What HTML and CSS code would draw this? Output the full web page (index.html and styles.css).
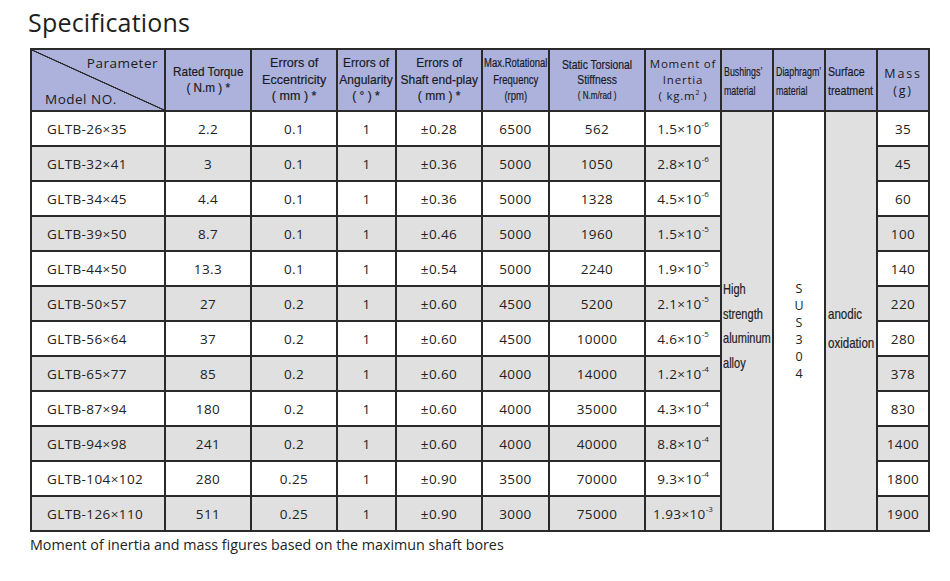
FILE: index.html
```html
<!DOCTYPE html>
<html>
<head>
<meta charset="utf-8">
<link rel="stylesheet" href="styles.css">
</head>
<body>
<h1 class="title">Specifications</h1>
<table class="spec">
  <colgroup>
    <col class="c-model"><col class="c86"><col class="c86"><col class="c59"><col class="c86"><col class="c67"><col class="c96"><col class="c76"><col class="c52"><col class="c52"><col class="c52"><col class="c52">
  </colgroup>
  <thead>
    <tr class="head">
      <th class="diag"><div class="diag-in"><span class="param">Parameter</span><span class="model">Model NO.</span></div></th>
      <th class="hd two"><span class="sx s87">Rated Torque<br>( N.m ) *</span></th>
      <th class="hd"><span class="sx s93">Errors of<br>Eccentricity<br>( mm ) *</span></th>
      <th class="hd"><span class="sx s89">Errors of<br>Angularity<br>( ° ) *</span></th>
      <th class="hd"><span class="sx s89">Errors of<br>Shaft end-play<br>( mm ) *</span></th>
      <th class="hd sm"><span class="sx s76">Max.Rotational<br>Frequency<br>(rpm)</span></th>
      <th class="hd st"><span class="sx s77">Static Torsional<br>Stiffness<br><span class="tiny">( N.m/rad )</span></span></th>
      <th class="wide">Moment of<br>Inertia<br>( kg.m<sup>2</sup> )</th>
      <th class="hd mat"><span class="sxl s655">Bushings’<br>material</span></th>
      <th class="hd mat"><span class="sxl s655">Diaphragm’<br>material</span></th>
      <th class="hd mat"><span class="sxl s79">Surface<br>treatment</span></th>
      <th class="mass">Mass<br>(g)</th>
    </tr>
  </thead>
  <tbody>
    <tr class="w">
      <td class="mod">GLTB-26×35</td><td>2.2</td><td>0.1</td><td>1</td><td>±0.28</td><td>6500</td><td>562</td><td>1.5×10<sup>-6</sup></td>
      <td rowspan="12" class="g merged"><div class="alum"><span class="sxl s76">High<br>strength<br>aluminum<br>alloy</span></div></td>
      <td rowspan="12" class="w merged"><div class="sus">S<br>U<br>S<br>3<br>0<br>4</div></td>
      <td rowspan="12" class="g merged"><div class="anod"><span class="sxl s77">anodic<br>oxidation</span></div></td>
      <td>35</td>
    </tr>
    <tr class="g"><td class="mod">GLTB-32×41</td><td>3</td><td>0.1</td><td>1</td><td>±0.36</td><td>5000</td><td>1050</td><td>2.8×10<sup>-6</sup></td><td>45</td></tr>
    <tr class="w"><td class="mod">GLTB-34×45</td><td>4.4</td><td>0.1</td><td>1</td><td>±0.36</td><td>5000</td><td>1328</td><td>4.5×10<sup>-6</sup></td><td>60</td></tr>
    <tr class="g"><td class="mod">GLTB-39×50</td><td>8.7</td><td>0.1</td><td>1</td><td>±0.46</td><td>5000</td><td>1960</td><td>1.5×10<sup>-5</sup></td><td>100</td></tr>
    <tr class="w"><td class="mod">GLTB-44×50</td><td>13.3</td><td>0.1</td><td>1</td><td>±0.54</td><td>5000</td><td>2240</td><td>1.9×10<sup>-5</sup></td><td>140</td></tr>
    <tr class="g"><td class="mod">GLTB-50×57</td><td>27</td><td>0.2</td><td>1</td><td>±0.60</td><td>4500</td><td>5200</td><td>2.1×10<sup>-5</sup></td><td>220</td></tr>
    <tr class="w"><td class="mod">GLTB-56×64</td><td>37</td><td>0.2</td><td>1</td><td>±0.60</td><td>4500</td><td>10000</td><td>4.6×10<sup>-5</sup></td><td>280</td></tr>
    <tr class="g"><td class="mod">GLTB-65×77</td><td>85</td><td>0.2</td><td>1</td><td>±0.60</td><td>4000</td><td>14000</td><td>1.2×10<sup>-4</sup></td><td>378</td></tr>
    <tr class="w"><td class="mod">GLTB-87×94</td><td>180</td><td>0.2</td><td>1</td><td>±0.60</td><td>4000</td><td>35000</td><td>4.3×10<sup>-4</sup></td><td>830</td></tr>
    <tr class="g"><td class="mod">GLTB-94×98</td><td>241</td><td>0.2</td><td>1</td><td>±0.60</td><td>4000</td><td>40000</td><td>8.8×10<sup>-4</sup></td><td>1400</td></tr>
    <tr class="w"><td class="mod">GLTB-104×102</td><td>280</td><td>0.25</td><td>1</td><td>±0.90</td><td>3500</td><td>70000</td><td>9.3×10<sup>-4</sup></td><td>1800</td></tr>
    <tr class="g"><td class="mod">GLTB-126×110</td><td>511</td><td>0.25</td><td>1</td><td>±0.90</td><td>3000</td><td>75000</td><td>1.93×10<sup>-3</sup></td><td>1900</td></tr>
  </tbody>
</table>
<p class="note">Moment of inertia and mass figures based on the maximun shaft bores</p>
</body>
</html>
```
FILE: styles.css
```css
html, body {
  margin: 0;
  padding: 0;
  background: #ffffff;
}
body {
  font-family: "Open Sans", "Noto Sans", sans-serif;
  color: #222222;
}
.title {
  margin: 0;
  padding: 7px 0 0 28px;
  height: 30px;
  line-height: 30px;
  font-size: 25px;
  font-weight: 400;
  letter-spacing: 0.2px;
  color: #1e1e1e;
}
.spec {
  margin: 11px 0 0 30px;
  border-collapse: collapse;
  table-layout: fixed;
  width: 898px;
  border: 2px solid #2a2a2a;
}
.c-model { width: 134px; }
.c86 { width: 86px; }
.c59 { width: 59px; }
.c67 { width: 67px; }
.c96 { width: 96px; }
.c76 { width: 76px; }
.c52 { width: 52px; }
.spec th, .spec td {
  border: 2px solid #2a2a2a;
  padding: 0;
  text-align: center;
  vertical-align: middle;
  overflow: visible;
}
.spec th {
  background: #adb2dd;
  font-weight: 400;
  color: #1a1a22;
}
.head { height: 62px; }
.spec tbody tr { height: 35px; }
.spec td {
  font-size: 13.5px;
  letter-spacing: 0.4px;
  color: #222222;
}
.w, .w td { background: #ffffff; }
.g, .g td { background: #e0e0e0; }
.spec td.merged.g { background: #e0e0e0; }
.spec td.merged.w { background: #ffffff; }
.mod {
  text-align: left !important;
  padding-left: 15px !important;
}
sup {
  font-size: 8px;
  line-height: 0;
  vertical-align: 7px;
  letter-spacing: 0;
}

/* condensed text: laid out wider, then scaled back to the cell width */
.sx {
  display: block;
  width: calc(100% / var(--s));
  margin-left: calc(50% - 50% / var(--s));
  text-align: center;
  transform: scaleX(var(--s));
  transform-origin: 50% 50%;
}
.sxl {
  display: block;
  width: calc(100% / var(--s));
  text-align: left;
  transform: scaleX(var(--s));
  transform-origin: 0 50%;
}
.s93 { --s: 0.93; }
.s89 { --s: 0.89; }
.s87 { --s: 0.87; }
.s79 { --s: 0.79; }
.s77 { --s: 0.77; }
.s76 { --s: 0.76; }
.s655 { --s: 0.655; }

.hd {
  font-family: "Liberation Sans", Arial, sans-serif;
  font-size: 13.5px;
  line-height: 16.5px;
  letter-spacing: 0;
  -webkit-text-stroke: 0.2px currentColor;
}
.two { line-height: 16px; }
.sm { font-size: 12.5px; line-height: 16.5px; }
.st { font-size: 13.5px; line-height: 15.2px; }
.tiny { font-size: 10.5px; }
.mat {
  font-size: 13.5px;
  line-height: 19px;
  padding: 2px 0 0 2px !important;
  text-align: left !important;
}
.wide {
  font-size: 11.5px;
  line-height: 15.7px;
  letter-spacing: 0.8px;
}
.wide sup { font-size: 7px; vertical-align: 5px; }
.mass {
  font-size: 12.5px;
  line-height: 17px;
  letter-spacing: 1.8px;
  padding-top: 3px !important;
}
.diag {
  background: #adb2dd linear-gradient(to top right, transparent calc(50% - 0.9px), #2a2a2a calc(50% - 0.4px), #2a2a2a calc(50% + 0.4px), transparent calc(50% + 0.9px)) !important;
}
.diag-in {
  display: flex;
  flex-direction: column;
  justify-content: space-between;
  height: 58px;
  font-size: 13.5px;
  letter-spacing: 0.5px;
}
.param {
  align-self: flex-end;
  padding: 3px 6px 0 0;
  line-height: 18px;
}
.model {
  align-self: flex-start;
  padding: 0 0 1px 13px;
  line-height: 18px;
}
.merged {
  vertical-align: middle;
}
.alum {
  padding-left: 1px;
  font-family: "Liberation Sans", Arial, sans-serif;
  font-size: 14.5px;
  line-height: 24.5px;
  letter-spacing: 0;
  margin-top: 10px;
  -webkit-text-stroke: 0.2px currentColor;
}
.sus {
  font-size: 12.5px;
  line-height: 17px;
  letter-spacing: 0;
  margin-top: 20px;
}
.anod {
  padding-left: 2px;
  font-family: "Liberation Sans", Arial, sans-serif;
  font-size: 15px;
  line-height: 29px;
  letter-spacing: 0;
  margin-top: 14px;
  -webkit-text-stroke: 0.2px currentColor;
}
.note {
  margin: 3px 0 0 30px;
  font-size: 14.3px;
  line-height: 20px;
  letter-spacing: 0;
  color: #222222;
}
```
